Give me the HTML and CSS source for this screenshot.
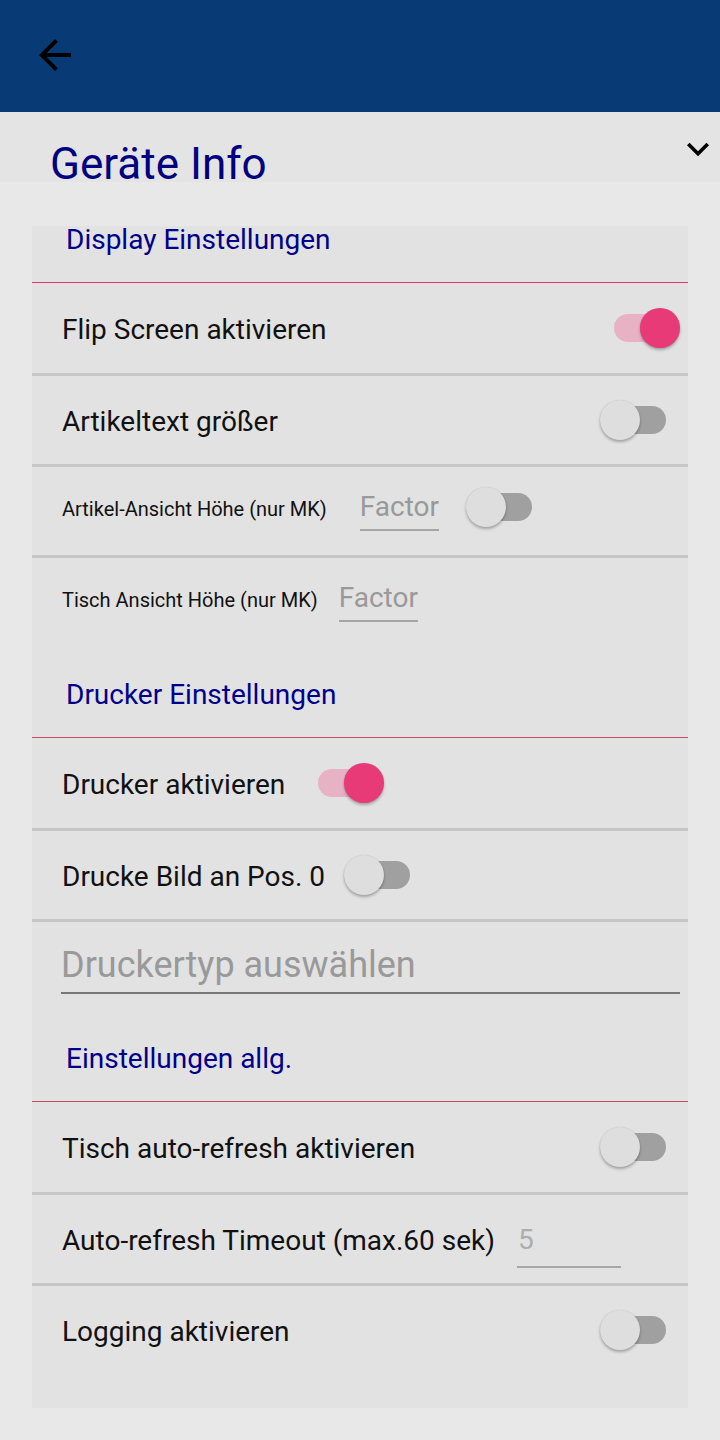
FILE: index.html
```html
<!DOCTYPE html>
<html lang="de">
<head>
<meta charset="utf-8">
<title>Geräte Info</title>
<link rel="stylesheet" href="styles.css">
</head>
<body>
<header class="appbar">
  <svg class="back" viewBox="0 0 24 24" width="48" height="48"><path d="M20 11H7.83l5.59-5.59L12 4l-8 8 8 8 1.41-1.41L7.83 13H20v-2z" fill="#000"/></svg>
</header>
<div class="titlebar">
  <h1 class="title">Geräte Info</h1>
  <svg class="chev" viewBox="0 0 24 24" width="44" height="44"><path d="M16.59 8.59L12 13.17 7.41 8.59 6 10l6 6 6-6z" fill="#000"/></svg>
</div>
<main class="card">
  <div class="sec sec-first"><span>Display Einstellungen</span></div>
  <div class="row row-first sep">
    <span class="label">Flip Screen aktivieren</span>
    <span class="switch on push"><span class="track"></span><span class="thumb"></span></span>
  </div>
  <div class="row sep">
    <span class="label">Artikeltext größer</span>
    <span class="switch push"><span class="track"></span><span class="thumb"></span></span>
  </div>
  <div class="row sep">
    <span class="label small">Artikel-Ansicht Höhe (nur MK)</span>
    <span class="hint-input factor gap32">Factor</span>
    <span class="switch gap27 up4"><span class="track"></span><span class="thumb"></span></span>
  </div>
  <div class="row">
    <span class="label small">Tisch Ansicht Höhe (nur MK)</span>
    <span class="hint-input factor gap21">Factor</span>
  </div>

  <div class="sec sec-other"><span>Drucker Einstellungen</span></div>
  <div class="row row-first sep">
    <span class="label">Drucker aktivieren</span>
    <span class="switch on gap19"><span class="track"></span><span class="thumb"></span></span>
  </div>
  <div class="row sep">
    <span class="label">Drucke Bild an Pos. 0</span>
    <span class="switch gap19"><span class="track"></span><span class="thumb"></span></span>
  </div>
  <div class="select-row">
    <div class="select">Druckertyp auswählen</div>
  </div>

  <div class="sec sec-other"><span>Einstellungen allg.</span></div>
  <div class="row row-first sep">
    <span class="label">Tisch auto-refresh aktivieren</span>
    <span class="switch push"><span class="track"></span><span class="thumb"></span></span>
  </div>
  <div class="row sep">
    <span class="label">Auto-refresh Timeout (max.60 sek)</span>
    <span class="num-input">5</span>
  </div>
  <div class="row">
    <span class="label">Logging aktivieren</span>
    <span class="switch push"><span class="track"></span><span class="thumb"></span></span>
  </div>
</main>
</body>
</html>
```
FILE: styles.css
```css
* { box-sizing: border-box; }
html, body { margin: 0; padding: 0; }
body {
  width: 720px;
  height: 1440px;
  background: #e8e8e8;
  font-family: Roboto, "Noto Sans", "Liberation Sans", sans-serif;
  overflow: hidden;
}
.appbar {
  height: 112px;
  background: #083a75;
  padding: 31px 0 0 31px;
}
.back { display: block; }
.titlebar {
  height: 70px;
  background: #e4e4e4;
  display: flex;
  justify-content: space-between;
  align-items: flex-start;
}
.title {
  margin: 0;
  padding: 30px 0 0 50px;
  font-size: 44px;
  line-height: 44px;
  font-weight: 400;
  color: #000080;
}
.chev { display: block; margin-top: 15px; }
.card {
  margin: 44px 32px 0 32px;
  background: #e2e2e2;
  padding-bottom: 34px;
}
.sec {
  display: flex;
  align-items: flex-end;
  padding: 0 33px 28px 34px;
  font-size: 28px;
  line-height: 28px;
  color: #00008b;
}
.sec-first { height: 57px; border-bottom: 1px solid #e8306c; }
.sec-other { height: 92px; border-bottom: 1px solid #c9486d; }
.row {
  height: 88px;
  display: flex;
  align-items: center;
  padding: 0 8px 0 30px;
}
.row.row-first { height: 90px; }
.row.sep { border-bottom: 3px solid #c6c6c6; height: 91px; }
.row.row-first.sep { height: 93px; }
.label {
  font-size: 28px;
  line-height: 32px;
  padding-top: 3px;
  color: #111;
  white-space: nowrap;
}
.label.small { font-size: 20px; line-height: 24px; padding-top: 0; padding-bottom: 4px; }
.hint-input {
  font-size: 28px;
  line-height: 32px;
  color: #999;
  padding-bottom: 6px;
  border-bottom: 2px solid #a6a6a6;
}
.gap32 { margin-left: 33px; }
.gap27 { margin-left: 27px; }
.gap21 { margin-left: 21px; }
.gap19 { margin-left: 19px; }
.push { margin-left: auto; }
.up4 { margin-bottom: 8px; }
.switch {
  position: relative;
  width: 80px;
  height: 40px;
  flex: none;
}
.switch .track {
  position: absolute;
  left: 14px;
  right: 14px;
  top: 6px;
  height: 28px;
  border-radius: 14px;
  background: #a0a0a0;
}
.switch .thumb {
  position: absolute;
  left: 0;
  top: 0;
  width: 40px;
  height: 40px;
  border-radius: 50%;
  background: #dedede;
  box-shadow: 0 2px 3px rgba(0,0,0,0.28), 0 0 1px rgba(0,0,0,0.15);
}
.switch.on .track { background: #e8b2c5; }
.switch.on .thumb { left: auto; right: 0; background: #e93a78; }
.select-row {
  height: 88px;
  padding: 22px 8px 0 29px;
}
.select {
  font-size: 36px;
  line-height: 42px;
  color: #999;
  padding-bottom: 6px;
  border-bottom: 2px solid #777;
}
.num-input {
  margin-left: 22px;
  width: 104px;
  font-size: 28px;
  line-height: 32px;
  color: #adadad;
  padding: 13px 0 10px 1px;
  border-bottom: 2px solid #a8a8a8;
}
```
